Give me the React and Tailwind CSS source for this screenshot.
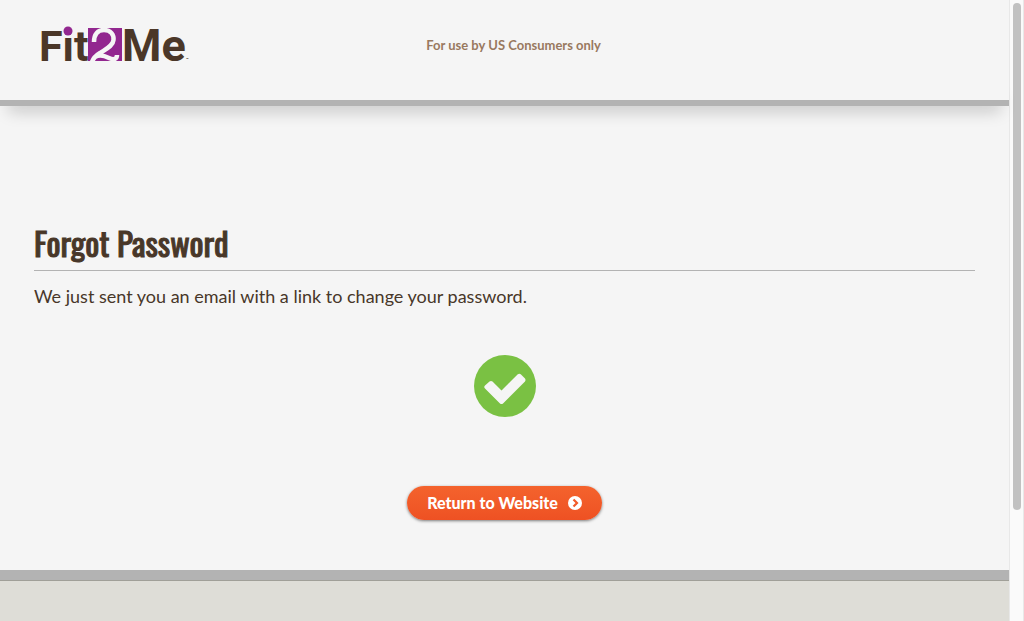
function Logo() {
  return (
    <svg viewBox="0 0 154 44" className="block h-11 w-[154px] overflow-visible" role="img" aria-label="Fit2Me">
      <rect x="49" y="5" width="34" height="33" fill="#92278f" />
      <path
        d="M55 19C55 11 59 7 65 7C72 7 75 12 74.500 17C74 23 67 26 61 30C56 33 54 36 53 39M56 34C61 31 66 33 70 35C75 37.500 78 36 78 32"
        fill="none"
        stroke="#f5f5f5"
        strokeWidth="4.500"
      />
      <g fontFamily="Roboto, sans-serif" fontWeight="700" fill="#4b3728">
        <text x="0" y="38" fontSize="43">Fit</text>
        <text x="83" y="38" fontSize="45">Me</text>
        <text x="147" y="38" fontSize="4">™</text>
      </g>
      <circle cx="29" cy="8" r="4.500" fill="#92278f" />
    </svg>
  );
}

function Header() {
  return (
    <header className="relative z-10">
      <div className="absolute inset-x-2 bottom-0 h-4 shadow-[0_6px_16px_rgba(0,0,0,0.18)]" />
      <div className="relative border-b-6 border-[#b3b3b3] bg-[#f5f5f5] px-[35px] pt-[23px] pb-[33px]">
        <div className="grid grid-cols-12 items-center">
          <a href="#home" className="col-span-5 ml-1">
            <Logo />
          </a>
          <p className="col-span-7 text-[13px] leading-5 font-bold text-[#99795f]">
            For use by US Consumers only
          </p>
        </div>
      </div>
    </header>
  );
}

function Scrollbar() {
  return (
    <div aria-hidden="true" className="flex w-[15px] shrink-0 justify-center border-x border-[#e8e8e8] bg-[#fafafa] pt-[3px]">
      <div className="h-[507px] w-2 rounded-full bg-[#c1c1c1]" />
    </div>
  );
}

export default function App() {
  return (
    <div className="flex min-h-screen bg-[#f5f5f5] font-['Lato',sans-serif] text-[#483729]">
      <div className="flex min-w-0 flex-1 flex-col">
        <Header />
        <main className="px-[34px] pt-[115px] pb-[50px]">
          <h1 className="border-b border-[#b3b3b3] pb-[5px] font-['Oswald','Liberation_Sans_Narrow',sans-serif] text-[33px] leading-[44px] font-normal [-webkit-text-stroke:1px]">
            Forgot Password
          </h1>
          <p className="mt-3 text-lg leading-[26px]">
            We just sent you an email with a link to change your password.
          </p>
          <svg viewBox="0 0 62 62" className="mx-auto mt-[46px] block size-[62px]" aria-hidden="true">
            <circle cx="31" cy="31" r="31" fill="#7ac143" />
            <path
              d="M11 30.500L15.500 26.500Q17 25.500 18.500 26.500L27.500 35.500L43.500 19.500Q45.500 18 47 19.500L51 23.500Q52 25 51 26.500L29 48.500Q27.500 49.500 26 48.500L11 33.500Q9.500 32 11 30.500Z"
              fill="#f5f5f5"
            />
          </svg>
          <button
            type="button"
            className="mx-auto mt-[69px] flex h-[34px] items-center gap-[10px] rounded-full bg-linear-to-b from-[#f4632d] to-[#ee5123] px-5 text-base font-black text-white shadow-[0_1px_3px_rgba(0,0,0,0.5)]"
          >
            Return to Website
            <svg viewBox="0 0 14 14" className="size-[14px]" aria-hidden="true">
              <circle cx="7" cy="7" r="7" fill="#fff" />
              <path d="M5.500 3.500L9 7L5.500 10.500" fill="none" stroke="#f15a29" strokeWidth="2.200" />
            </svg>
          </button>
        </main>
        <footer className="flex-1 border-t-10 border-[#b3b3b3] bg-[#deddd7]">
          <div className="h-px bg-[#a09f98]" />
        </footer>
      </div>
      <Scrollbar />
    </div>
  );
}
